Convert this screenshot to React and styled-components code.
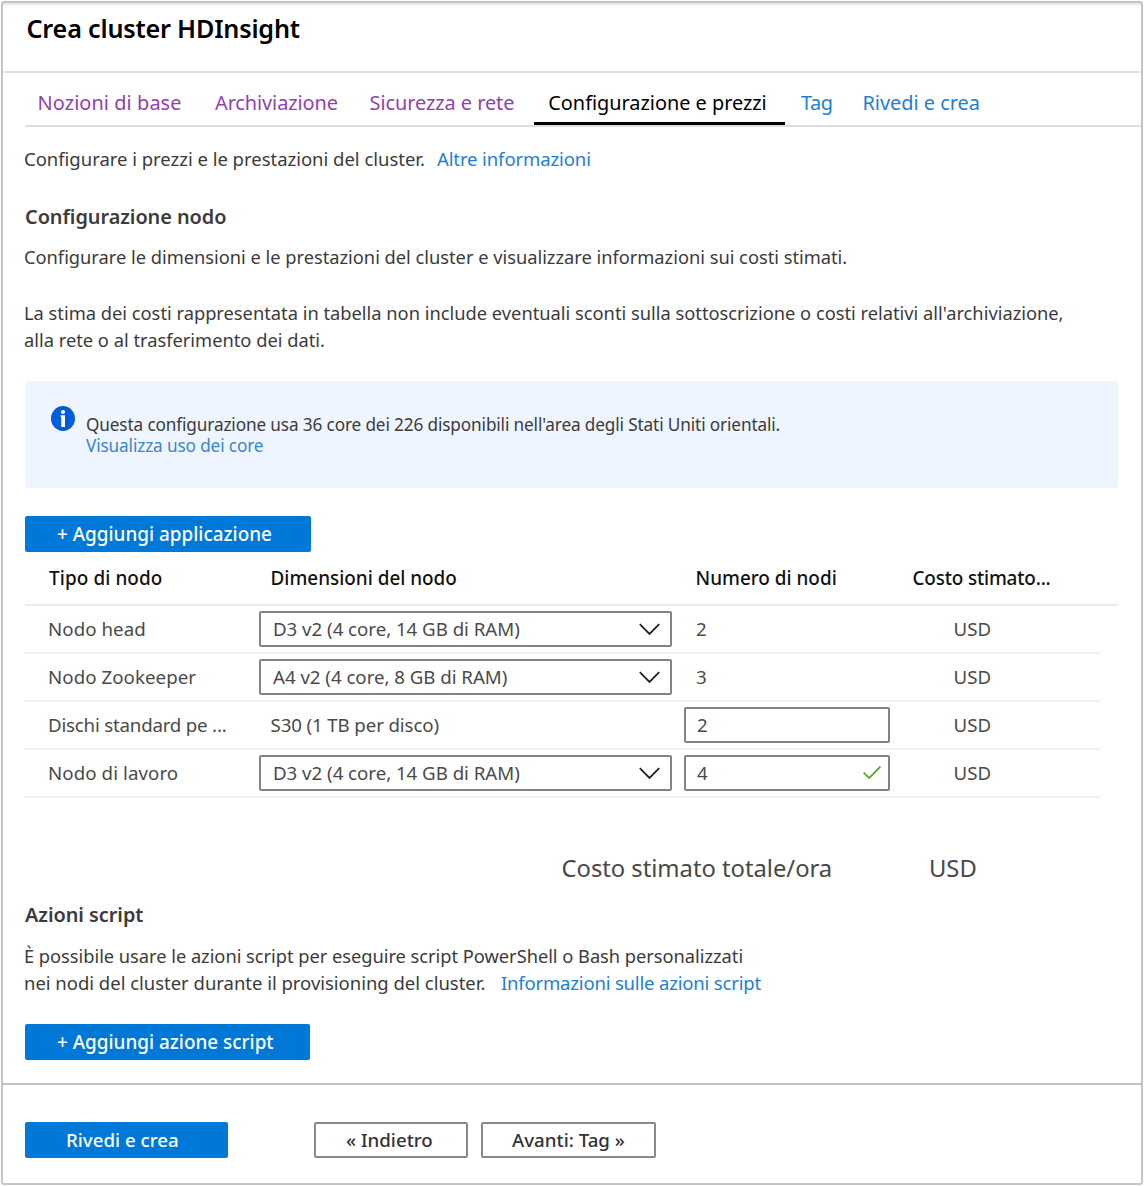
import React from "react";
import styled, { createGlobalStyle, css } from "styled-components";

const GlobalStyle = createGlobalStyle`
  *, *::before, *::after { box-sizing: border-box; }
  body { margin: 0; background: #fff; }
  #root { font-family: "Noto Sans", "Open Sans", sans-serif; color: #3b3b3b; }
  h1, h2, p { margin: 0; }
  a { text-decoration: none; }
`;

const Frame = styled.main`
  display: flex;
  flex-direction: column;
  width: 1142px;
  height: 1184px;
  margin: 1px;
  border: 2px solid #c3c5c5;
  border-radius: 3px;
  overflow: hidden;
`;

const Header = styled.header`
  height: 70px;
  padding: 8px 24px 0 23.5px;
  border-top: 2px solid #e9e9e9;
  border-bottom: 2px solid #e0e0e0;
`;

const Title = styled.h1`
  font-size: 25.2px;
  font-weight: 600;
  line-height: 30px;
  letter-spacing: -0.2px;
  color: #000;
`;

const Tabs = styled.nav`
  display: flex;
  height: 54px;
  margin-left: 22px;
  border-bottom: 2px solid #dedede;
`;

const tabTones = { visited: "#9240b0", active: "#000", next: "#1b80d6" };

const Tab = styled.a`
  width: ${(p) => p.$width}px;
  padding: 10px 0 0 ${(p) => p.$indent}px;
  border-bottom: 3px solid ${(p) => (p.$tone === "active" ? "#000" : "transparent")};
  font-size: 19.9px;
  line-height: 39px;
  letter-spacing: ${(p) => p.$track || 0}px;
  white-space: nowrap;
  color: ${(p) => tabTones[p.$tone]};
`;

const Content = styled.div`
  display: flex;
  flex-direction: column;
  height: 956px;
  padding: 18px 23px 0 21px;
`;

const Intro = styled.p`
  display: flex;
  gap: ${(p) => p.$gap || 12}px;
  font-size: 18.5px;
  line-height: ${(p) => p.$line || 28}px;
  letter-spacing: -0.02px;
  white-space: nowrap;
`;

const Link = styled.a`
  color: #1b80d6;
  letter-spacing: ${(p) => p.$track || 0}px;
`;

const SectionTitle = styled.h2`
  margin: ${(p) => p.$top}px 0 ${(p) => p.$bottom}px 1px;
  font-size: 19.9px;
  font-weight: 600;
  line-height: 28px;
  letter-spacing: -0.05px;
`;

const Paragraph = styled.p`
  font-size: 18.3px;
  line-height: 27px;
  white-space: nowrap;
  letter-spacing: ${(p) => p.$track || 0}px;
  & + & { margin-top: 29px; }
`;

const Notice = styled.section`
  display: flex;
  gap: 11px;
  height: 107px;
  margin: 28px 0 28px 1px;
  padding: 33px 0 0 26px;
  border-radius: 3px;
  background: #eef5ff;
  font-size: 17.2px;
  line-height: 21px;
  letter-spacing: -0.13px;
`;

const NoticeIcon = styled.svg`
  width: 24px;
  height: 25px;
  margin-top: -8px;
  flex: none;
`;

const NoticeText = styled.div`
  display: flex;
  flex-direction: column;
  a { color: #3a86cb; }
`;

const Button = styled.button`
  display: block;
  width: ${(p) => p.$width}px;
  height: 36px;
  margin: 0;
  margin-left: ${(p) => p.$left || 0}px;
  padding: 0 0 0 ${(p) => p.$indent}px;
  border-radius: 2px;
  font: 500 ${(p) => p.$size || 18.9}px/34px "Noto Sans", sans-serif;
  text-align: left;
  white-space: nowrap;
  ${(p) =>
    p.$primary
      ? css`border: 0; background: #0078d7; color: #fff;`
      : css`border: 2px solid #8a8a8a; background: #fff; color: #333; line-height: 32px;`}
`;

const Table = styled.div`
  display: flex;
  flex-direction: column;
  margin-left: 1px;
`;

const Row = styled.div`
  display: grid;
  grid-template-columns: 234px 425px 217px 1fr;
  align-items: center;
  height: 48px;
  margin-right: 18px;
  border-bottom: 2px solid #f0f0f0;
  font-size: 18.7px;
  line-height: 24px;
  color: #4a4a4a;
`;

const HeadRow = styled(Row)`
  height: 54px;
  margin-right: 0;
  border-bottom-color: #ebebeb;
  font-size: 18.9px;
  font-weight: 500;
  color: #111;
`;

const Cell = styled.span`
  padding-left: ${(p) => p.$indent}px;
  padding-bottom: ${(p) => (p.$head ? 0 : 1)}px;
  letter-spacing: ${(p) => p.$track || 0}px;
  white-space: nowrap;
`;

const Field = styled.div`
  display: flex;
  align-items: center;
  justify-content: space-between;
  width: ${(p) => p.$width}px;
  height: 36px;
  padding: 0 ${(p) => p.$right}px 0 ${(p) => p.$indent}px;
  border: 2px solid #858382;
  border-radius: 2px;
  background: #fff;
`;

const FieldValue = styled.span`
  padding-bottom: ${(p) => p.$lift || 0}px;
  letter-spacing: -0.03px;
`;

const Glyph = styled.svg`
  fill: none;
  stroke: ${(p) => p.$color};
  stroke-width: 1.8;
`;

const Total = styled.div`
  display: grid;
  grid-template-columns: 367.5px auto;
  margin: 55px 0 0 537.5px;
  font-size: 23.8px;
  line-height: 30px;
  letter-spacing: -0.03px;
  color: #484848;
`;

const ScriptLink = styled.div`
  margin-bottom: 27px;
`;

const Footer = styled.footer`
  display: flex;
  flex: 1;
  padding: 37px 22px 0;
  border-top: 2px solid #bfc0c0;
`;

const InfoIcon = () => (
  <NoticeIcon viewBox="0 0 24 25">
    <ellipse cx="12" cy="12.5" rx="12" ry="12.5" fill="#005cdc" />
    <circle cx="12" cy="6" r="2.1" fill="#fff" />
    <path d="M9.6 9.3H14V21H10.2V11H9.6Z" fill="#fff" />
  </NoticeIcon>
);

const Select = ({ children }) => (
  <Field $width={413} $indent={12} $right={10.5}>
    <FieldValue>{children}</FieldValue>
    <Glyph width="21" height="12" viewBox="0 0 21 12" $color="#222">
      <path d="M.8 1.2 10.5 11 20.2 1.2" />
    </Glyph>
  </Field>
);

const NumberField = ({ value, valid }) => (
  <Field $width={206} $indent={11} $right={7}>
    <FieldValue $lift={1}>{value}</FieldValue>
    {valid && (
      <Glyph width="18" height="14" viewBox="0 0 18 14" $color="#57a51a">
        <path d="M.7 6.7 6.2 12.1 17.4.7" />
      </Glyph>
    )}
  </Field>
);

const tabs = [
  { label: "Nozioni di base", tone: "visited", width: 177, indent: 12.6, track: 0.08 },
  { label: "Archiviazione", tone: "visited", width: 155, indent: 13, track: -0.08 },
  { label: "Sicurezza e rete", tone: "visited", width: 177, indent: 12.6, track: -0.05 },
  { label: "Configurazione e prezzi", tone: "active", width: 251, indent: 14.3, track: -0.02 },
  { label: "Tag", tone: "next", width: 62, indent: 16, track: -0.4 },
  { label: "Rivedi e crea", tone: "next", width: 140, indent: 15.5 },
];

const nodes = [
  { type: "Nodo head", size: "D3 v2 (4 core, 14 GB di RAM)", select: true, count: "2" },
  { type: "Nodo Zookeeper", size: "A4 v2 (4 core, 8 GB di RAM)", select: true, count: "3" },
  { type: "Dischi standard pe ...", size: "S30 (1 TB per disco)", count: "2", input: true, track: -0.2 },
  { type: "Nodo di lavoro", size: "D3 v2 (4 core, 14 GB di RAM)", select: true, count: "4", input: true, valid: true, track: 0.08 },
];

export default function App() {
  return (
    <>
      <GlobalStyle />
      <Frame>
        <Header>
          <Title>Crea cluster HDInsight</Title>
        </Header>
        <Tabs>
          {tabs.map((t) => (
            <Tab key={t.label} $tone={t.tone} $width={t.width} $indent={t.indent} $track={t.track}>
              {t.label}
            </Tab>
          ))}
        </Tabs>
        <Content>
          <Intro>
            <span>Configurare i prezzi e le prestazioni del cluster.</span>
            <Link $track={-0.1}>Altre informazioni</Link>
          </Intro>
          <SectionTitle $top={30} $bottom={12}>Configurazione nodo</SectionTitle>
          <Paragraph $track={-0.015}>
            Configurare le dimensioni e le prestazioni del cluster e visualizzare informazioni sui costi stimati.
          </Paragraph>
          <Paragraph>
            La stima dei costi rappresentata in tabella non include eventuali sconti sulla sottoscrizione o costi relativi all'archiviazione,
            <br />
            alla rete o al trasferimento dei dati.
          </Paragraph>
          <Notice>
            <InfoIcon />
            <NoticeText>
              <span>Questa configurazione usa 36 core dei 226 disponibili nell'area degli Stati Uniti orientali.</span>
              <a>Visualizza uso dei core</a>
            </NoticeText>
          </Notice>
          <Button $primary $width={286} $indent={32} $left={1}>+ Aggiungi applicazione</Button>
          <Table>
            <HeadRow>
              <Cell $head $indent={24} $track={0.1}>Tipo di nodo</Cell>
              <Cell $head $indent={11.5}>Dimensioni del nodo</Cell>
              <Cell $head $indent={11.5}>Numero di nodi</Cell>
              <Cell $head $indent={11.5} $track={-0.17}>Costo stimato...</Cell>
            </HeadRow>
            {nodes.map((n) => (
              <Row key={n.type}>
                <Cell $indent={23} $track={n.track ?? 0.06}>{n.type}</Cell>
                {n.select ? <Select>{n.size}</Select> : <Cell $indent={11.5} $track={-0.12}>{n.size}</Cell>}
                {n.input ? <NumberField value={n.count} valid={n.valid} /> : <Cell $indent={12}>{n.count}</Cell>}
                <Cell $indent={52.5}>USD</Cell>
              </Row>
            ))}
          </Table>
          <Total>
            <span>Costo stimato totale/ora</span>
            <span>USD</span>
          </Total>
          <SectionTitle $top={18} $bottom={13}>Azioni script</SectionTitle>
          <Paragraph $track={-0.03}>
            È possibile usare le azioni script per eseguire script PowerShell o Bash personalizzati
          </Paragraph>
          <ScriptLink>
            <Intro $gap={15.5} $line={28}>
              <span>nei nodi del cluster durante il provisioning del cluster.</span>
              <Link $track={-0.17}>Informazioni sulle azioni script</Link>
            </Intro>
          </ScriptLink>
          <Button $primary $width={285} $indent={32} $left={1}>+ Aggiungi azione script</Button>
        </Content>
        <Footer>
          <Button $primary $width={203} $indent={41} $size={18.7}>Rivedi e crea</Button>
          <Button $width={154} $indent={30} $left={86} $size={18.7}>« Indietro</Button>
          <Button $width={175} $indent={29} $left={13} $size={18.7}>Avanti: Tag »</Button>
        </Footer>
      </Frame>
    </>
  );
}
